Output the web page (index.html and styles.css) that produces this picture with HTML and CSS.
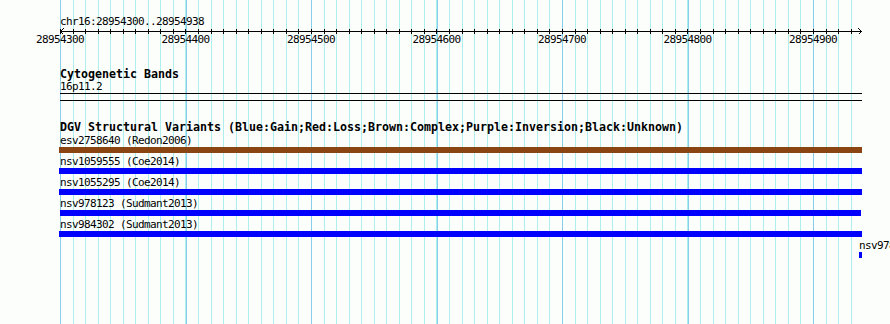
FILE: index.html
```html
<!DOCTYPE html>
<html lang="en">
<head>
    <meta charset="UTF-8">
    <title>chr16:28954300..28954938</title>
    <link rel="stylesheet" href="styles.css">
</head>
<body>

<div class="panel">

    <!-- regua -->
    <div class="ruler-track">
        <div class="ruler-title">chr16:28954300..28954938</div>
        <svg class="ruler" width="803" height="8" viewBox="0 0 803 8">
            <path d="M0 4.5H802M0.5 4.5L3.5 1.5M0.5 4.5L3.5 7.5M801.5 4.5L798.5 1.5M801.5 4.5L798.5 7.5" stroke="#000" fill="none" shape-rendering="crispEdges"/>
            <path d="M0.5 2V7M13.5 2V7M25.5 2V7M38.5 2V7M50.5 2V7M63.5 2V7M75.5 2V7M88.5 2V7M100.5 2V7M113.5 2V7M125.5 2V7M138.5 2V7M151.5 2V7M163.5 2V7M176.5 2V7M188.5 2V7M201.5 2V7M213.5 2V7M226.5 2V7M238.5 2V7M251.5 2V7M264.5 2V7M276.5 2V7M289.5 2V7M301.5 2V7M314.5 2V7M326.5 2V7M339.5 2V7M351.5 2V7M364.5 2V7M376.5 2V7M389.5 2V7M402.5 2V7M414.5 2V7M427.5 2V7M439.5 2V7M452.5 2V7M464.5 2V7M477.5 2V7M489.5 2V7M502.5 2V7M515.5 2V7M527.5 2V7M540.5 2V7M552.5 2V7M565.5 2V7M577.5 2V7M590.5 2V7M602.5 2V7M615.5 2V7M627.5 2V7M640.5 2V7M653.5 2V7M665.5 2V7M678.5 2V7M690.5 2V7M703.5 2V7M715.5 2V7M728.5 2V7M740.5 2V7M753.5 2V7M766.5 2V7M778.5 2V7M791.5 2V7" stroke="#000" shape-rendering="crispEdges"/>
        </svg>
        <div class="ruler-labels">
            <span>28954300</span>
            <span>28954400</span>
            <span>28954500</span>
            <span>28954600</span>
            <span>28954700</span>
            <span>28954800</span>
            <span>28954900</span>
        </div>
    </div>

    <!-- bandas -->
    <div class="track cyto">
        <div class="track-title">Cytogenetic Bands</div>
        <div class="feature-label">16p11.2</div>
        <div class="band"></div>
    </div>

    <!-- variantes -->
    <div class="track dgv">
        <div class="track-title">DGV Structural Variants (Blue:Gain;Red:Loss;Brown:Complex;Purple:Inversion;Black:Unknown)</div>
        <div class="feature">
            <div class="feature-label">esv2758640 (Redon2006)</div>
            <div class="bar complex"></div>
        </div>
        <div class="feature">
            <div class="feature-label">nsv1059555 (Coe2014)</div>
            <div class="bar gain"></div>
        </div>
        <div class="feature">
            <div class="feature-label">nsv1055295 (Coe2014)</div>
            <div class="bar gain"></div>
        </div>
        <div class="feature">
            <div class="feature-label">nsv978123 (Sudmant2013)</div>
            <div class="bar gain short"></div>
        </div>
        <div class="feature">
            <div class="feature-label">nsv984302 (Sudmant2013)</div>
            <div class="bar gain"></div>
        </div>
        <div class="feature edge">
            <div class="feature-label">nsv978102 (Sudmant2013)</div>
            <div class="bar gain tiny"></div>
        </div>
    </div>

</div>

</body>
</html>
```

FILE: styles.css
```css
/* Estilos gerais */
body {
    margin: 0;
    background-color: #fcfefc;
    font-family: "DejaVu Sans Mono", "Liberation Mono", monospace;
    color: #000;
    overflow: hidden;
}

/* grade: linhas a cada 10bp, mais fortes a cada 100bp */
.panel {
    margin-left: 60px;
    width: 830px;
    height: 324px;
    box-sizing: border-box;
    padding-top: 16px;
    background-image:
        repeating-linear-gradient(to right, #87ceeb 0, #87ceeb 1px, transparent 1px, transparent 125.5px),
        repeating-linear-gradient(to right, #afeeee 0, #afeeee 1px, transparent 1px, transparent 12.55px);
    background-size: 792px 100%;
    background-repeat: no-repeat;
}

.ruler-title, .feature-label, .ruler-labels {
    font-size: 11px;
    letter-spacing: -0.62px;
    line-height: 11px;
    white-space: nowrap;
}

.ruler {
    display: block;
    margin-bottom: -1px;
}

.ruler-labels {
    display: flex;
    margin-left: -62.75px;
}

.ruler-labels span {
    flex: none;
    width: 125.5px;
    text-align: center;
}

.track-title {
    font-weight: bold;
    font-size: 11.63px;
    line-height: 13px;
    white-space: nowrap;
}

.cyto {
    margin-top: 23px;
}

.band {
    margin-top: 1px;
    width: 802px;
    height: 6px;
    border-top: 1px solid #000;
    border-bottom: 1px solid #000;
}

.dgv {
    margin-top: 20px;
}

.dgv .track-title {
    margin-bottom: 1px;
}

.feature {
    margin-bottom: 3px;
}

.bar {
    margin-top: 1px;
    margin-left: -1px;
    width: 803px;
    height: 6px;
}

.bar.complex {
    background-color: #8b4513;
}

.bar.gain {
    background-color: #0000ff;
}

.bar.short {
    margin-left: 0;
    width: 801px;
}

/* feature cortada na borda da imagem */
.feature.edge {
    margin-left: 799px;
    width: 31px;
    overflow: hidden;
}

.bar.tiny {
    margin-left: 0;
    width: 3px;
}
```
